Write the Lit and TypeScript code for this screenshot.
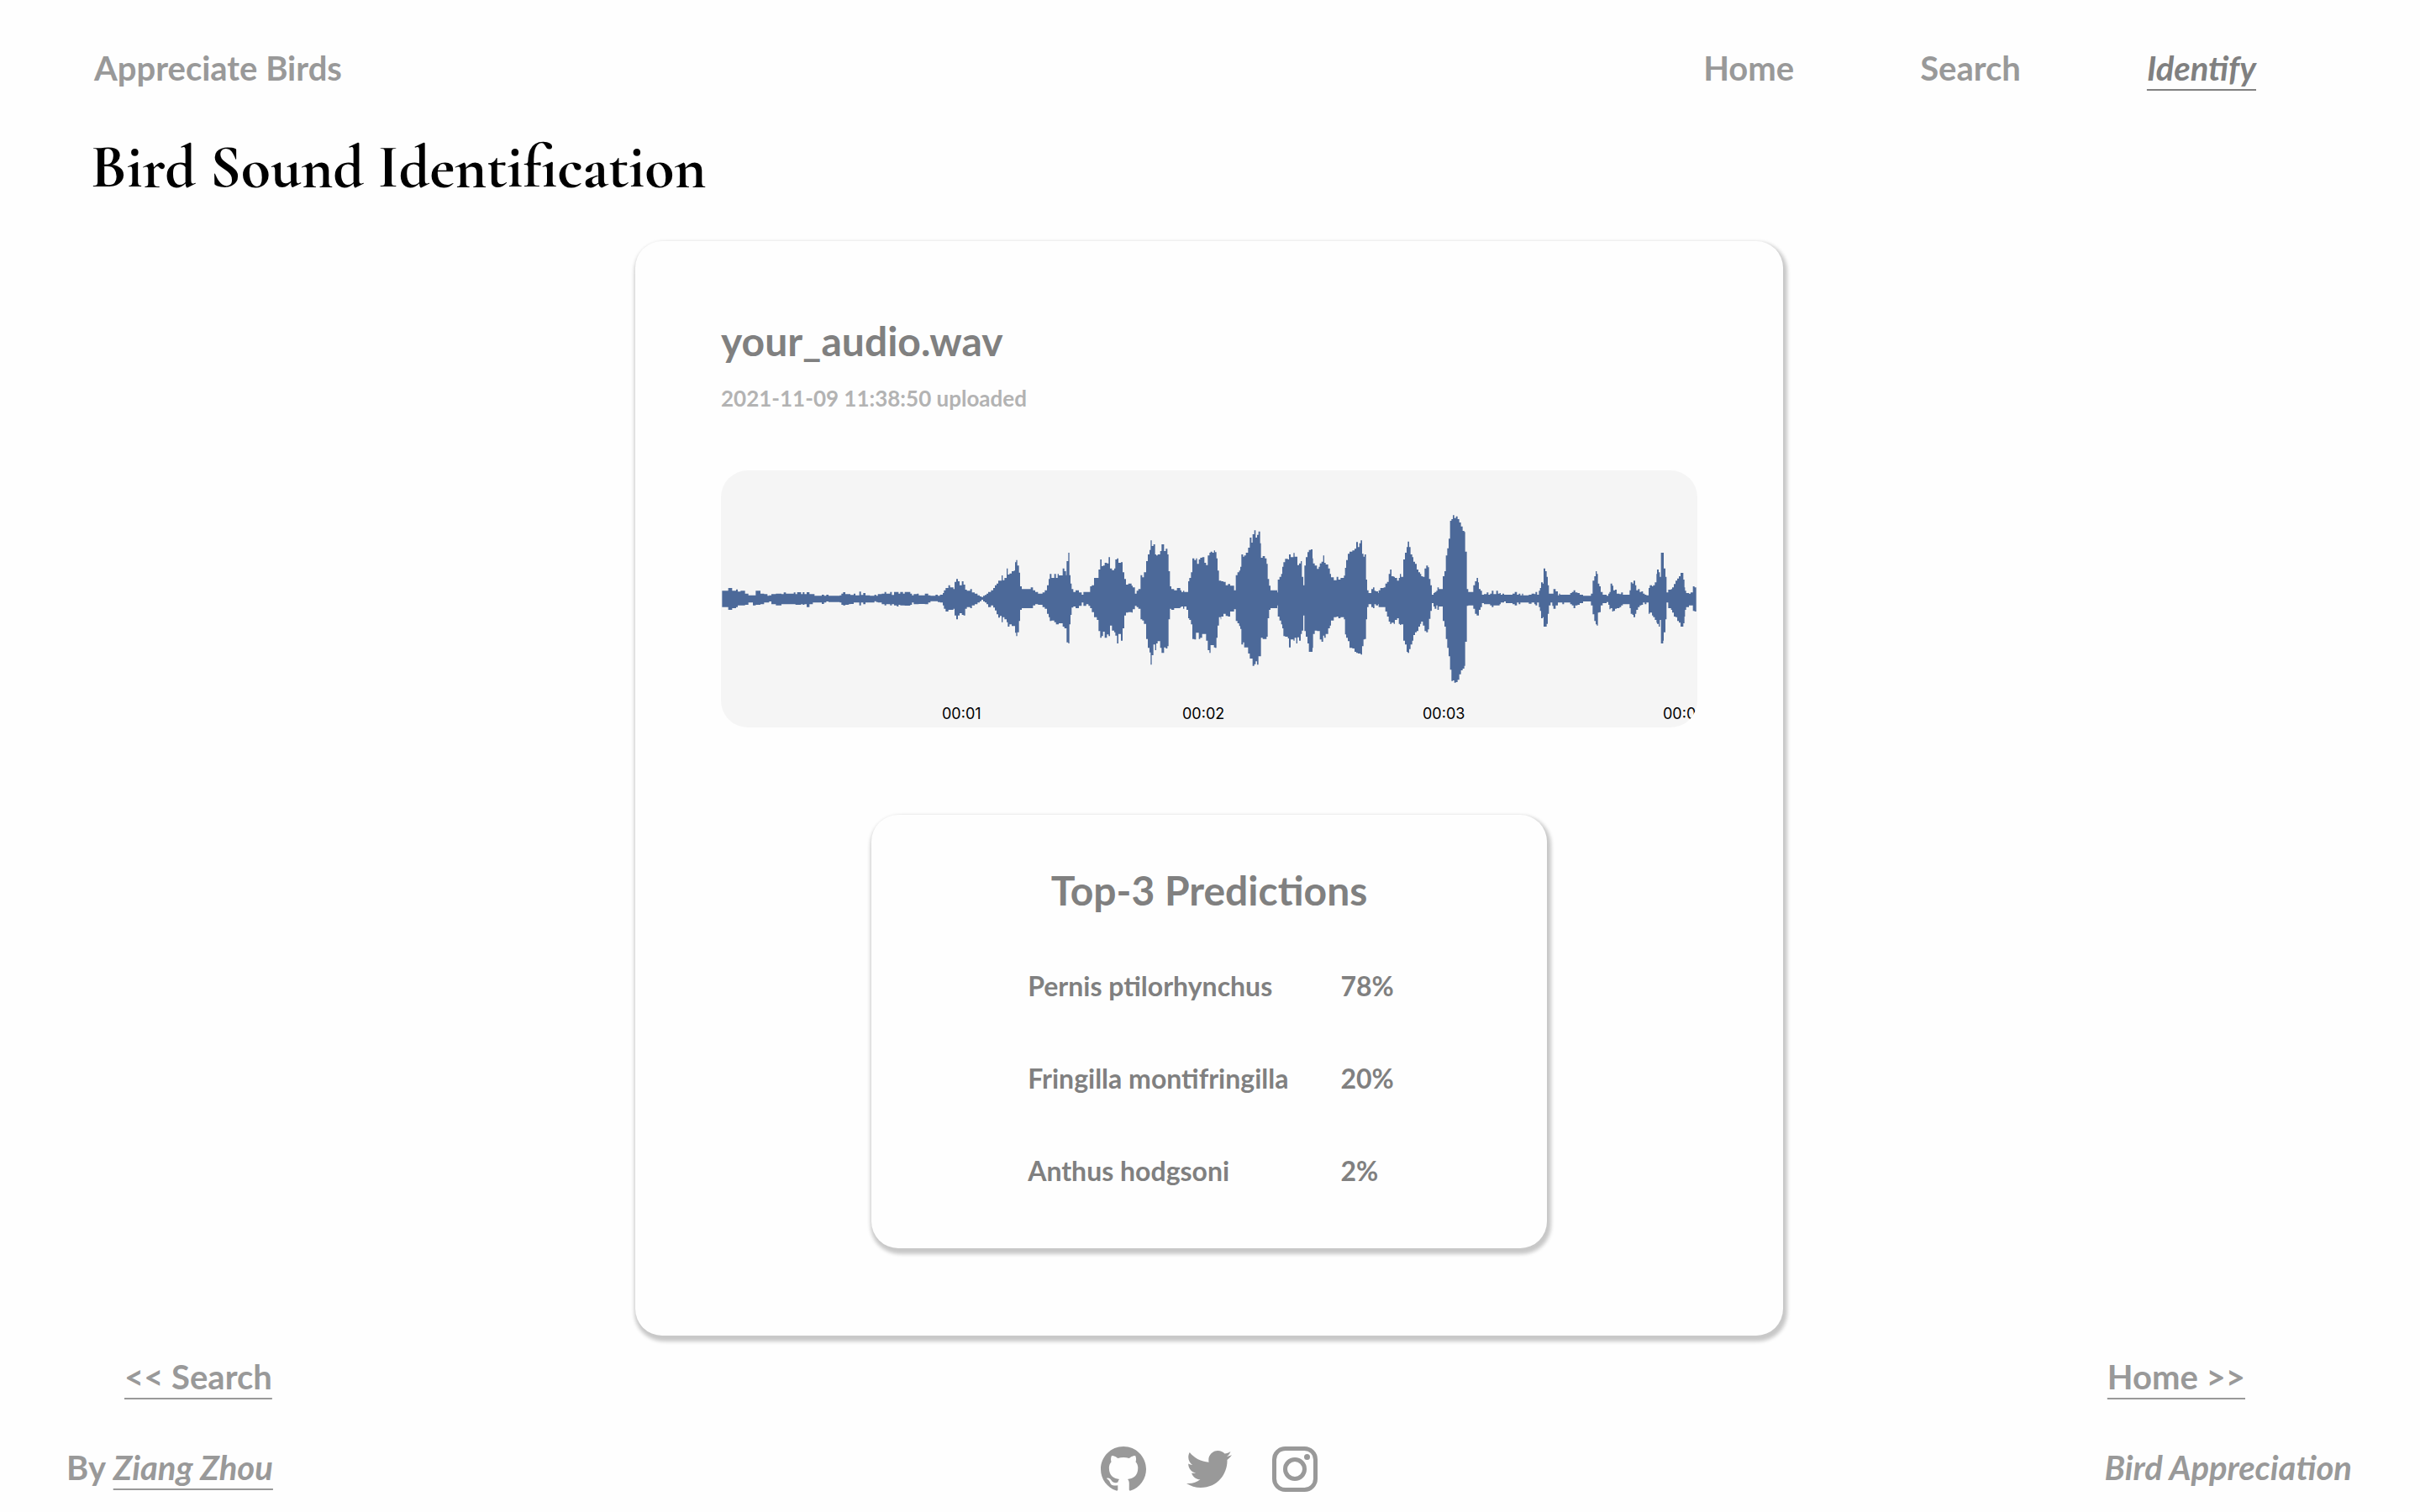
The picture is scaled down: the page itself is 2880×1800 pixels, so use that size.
import { LitElement, html, css, svg } from "lit";
import { customElement, property } from "lit/decorators.js";

/* Envelope steps "x,top,bottom", grouped by the x at which each group starts. */
const ENVELOPE: Array<[number, string]> = [
  [0, "28,310,368 50,300,378 64,310,372 78,305,368 84,313,362 94,310,362 110,320,360 122,326,352 138,326,362 148,310,360 165,320,358 178,322,352 190,328,352 196,326,348 204,322,358 220,320,362 240,322,358 248,316,358 256,320,358 284,316,358 290,322,360 296,315,360 310,322,358 316,315,360 322,322,358 330,315,368 340,322,358 352,322,352 358,328,352 384,324,357 392,328,352 400,324,348 408,328,350 448,326,352 454,320,360 460,315,362 468,322,360 480,322,358 486,325,357 498,320,352 504,326,352 518,313,362 524,325,352 532,318,358 540,326,352 556,328,352 572,324,347 578,328,350 584,322,352 598,320,358 608,314,362 614,320,358 628,314,362 634,325,358 642,314,362 652,314,366 658,320,360 664,314,362 674,320,362 680,314,363 700,320,360 706,326,352 712,322,358 724,320,358 730,326,357 752,320,358 764,326,352 772,328,347 790,324,347 798,328,350 806,324,352 816,318,362 820,308,374 826,300,384 836,290,378 842,298,378 854,304,374 858,278,398 864,268,412 870,276,398 876,290,390 884,276,396 890,288,398 896,306,374 902,310,368 914,304,372 920,316,362 930,320,358 940,326,352 948,330,347 954,332,342 960,328,348 966,325,352 972,320,358 978,314,368 988,308,362 996,300,370 1002,290,380 1008,284,394 1014,274,406 1020,274,400 1026,255,422 1030,272,404 1036,264,412 1044,230,422 1048,252,438 1054,248,430 1062,240,436 1070,238,436 1074,208,460 1078,200,472 1082,220,458 1088,245,418 1092,294,378 1098,304,372 1130,298,372 1138,308,362 1146,314,358 1156,320,360 1172,316,368 1180,308,374 1188,290,392 1194,268,404 1198,250,418 1204,264,416 1214,250,422 1220,264,430 1226,250,430"],
  [1230, "0,255,426 14,230,438 20,240,444 26,254,444 28,204,494 34,174,498 38,254,430 42,284,396 46,304,370 52,314,366 60,308,372 72,316,364 82,324,352 88,314,364 98,314,358 106,314,364 112,294,372 118,290,386 126,264,404 136,264,414 142,234,454 148,198,478 153,222,472 158,220,456 164,210,478 172,212,466 178,190,472 183,230,434 190,236,452 198,230,458 202,198,470 208,194,498 213,210,464 222,208,488 228,244,444 234,268,398 240,288,388 248,284,386 260,292,388 264,298,376 272,320,364 278,310,368 284,304,374 292,254,412 298,262,416 304,244,428 312,204,482 318,180,514 324,164,530 328,130,574 332,150,540 338,144,502 344,180,522 348,184,498 353,180,490 362,168,514 367,144,532 376,168,512 382,160,516 388,180,508 392,240,412 397,294,374 402,304,378 412,308,372 422,300,372 434,308,368 438,314,366 444,310,374 448,314,366 456,314,378 462,276,408 466,264,414 472,244,430 477,194,482 484,200,484 490,194,460 494,214,460 500,198,482 505,192,478 512,190,464 520,210,464 526,218,488 532,184,522 538,174,532 542,170,504 548,174,504 554,166,512 558,172,514 563,194,478 567,238,434 572,274,404 578,274,412 580,276,402 588,278,392 596,290,400 604,286,402 612,292,384 626,308,376 632,254,418 638,244,426 644,238,436 648,224,446 652,180,502 658,188,494 662,184,512 668,174,512 676,156,534 682,120,552 688,138,552 692,108,578 698,94,572 703,120,562 708,110,574 713,98,544 719,140,544 722,192,478 728,186,482 736,194,482 742,214,474 746,268,408 751,292,378 756,308,372 780,316,362 782,270,402 788,260,416 794,250,430 798,224,444 802,208,472 808,196,474 818,198,480 822,180,512 828,190,484 838,175,488 842,188,478 848,188,498 852,218,476 858,212,488 864,204,464 868,260,452 873,290,398 877,220,454 882,190,474 888,172,498 893,164,528 900,162,528 906,194,514 908,212,464 914,220,452 922,232,454 928,224,454 932,212,484 938,206,492 944,184,470 948,210,478 953,216,464 962,230,444 968,250,434 972,262,416 982,272,404 992,260,402 998,270,408 1006,264,404 1018,256,412 1022,228,466 1026,200,478 1032,178,490 1038,170,514 1048,166,516 1056,160,528 1062,136,532 1068,154,534 1073,140,534 1078,130,538 1083,178,508 1088,188,484 1092,180,482 1097,270,412 1101,308,368 1106,318,358 1116,304,368 1122,298,372 1127,310,358 1132,312,362 1140,318,358 1142,308,368 1148,300,368 1160,298,368 1166,284,384 1172,278,402 1178,250,420 1183,234,428 1188,258,424 1196,260,428 1200,264,414 1208,274,408 1214,264,428 1218,250,432 1222,260,430"],
  [2460, "0,198,488 6,174,502 12,154,528 16,134,532 21,154,518 26,180,502 32,190,488 36,206,468 42,214,458 48,234,454 54,244,438 60,250,428 64,258,420 70,260,434 76,230,454 82,220,458 88,226,448 92,268,410 97,290,382 102,324,354 108,318,366 112,314,374 118,310,362 122,298,378 127,304,366 141,258,418 147,240,438 152,184,482 157,158,514 162,124,544 167,60,592 172,54,632 177,40,630 182,50,638 188,44,636 194,54,628 200,66,608 206,80,594 212,96,588 218,100,578 221,170,492 227,304,364 232,314,362 250,290,374 256,276,392 262,264,398 267,280,398 270,304,378 276,310,368 281,324,354 288,322,358 298,316,358 304,324,358 310,320,362 316,310,368 322,322,362 332,310,362 338,320,362 344,318,358 348,324,352 354,320,352 360,324,348 366,324,354 390,320,358 398,314,362 406,324,352 412,320,358 418,326,352 424,320,352 428,326,352 448,324,356 458,320,352 468,322,358 472,314,362 478,324,352 484,310,368 488,300,382 492,280,408 498,284,404 501,230,438 507,240,438 512,260,428 516,290,392 520,320,362 526,320,352 532,320,364 536,304,374 544,312,362 552,326,352 556,320,352 560,324,352 568,324,358 574,324,352 596,318,358 602,314,362 608,308,372 614,316,362 622,318,360 630,324,354 642,328,348 670,320,362 676,274,394 682,258,418 687,240,430 691,250,434 695,284,388 700,294,386 705,314,362 712,324,354 726,328,350 732,320,360 736,314,376 740,284,372 746,292,384 750,308,382 756,306,374 762,320,372 772,322,368 778,316,362 784,324,358 808,308,372 812,280,392 818,284,396 822,274,404 828,290,392 832,308,378 838,304,368 844,314,362 850,312,360 856,320,352 862,324,358 868,326,352 876,300,392 880,290,388 888,294,398 892,290,404 898,280,414 904,250,424 906,234,428 912,244,438 916,260,414 920,174,498 928,174,488 930,230,458 936,260,412 940,316,352 946,306,372 956,304,378 960,298,388 966,286,402 972,274,404 978,266,418 984,258,424 990,246,438 1000,270,426 1004,298,402 1006,310,378 1010,318,368 1020,320,362 1026,316,362 1034,294,382 1040,298,384 1046,298,384"],
];

function envelopePath(): string {
  const steps = ENVELOPE.flatMap(([origin, data]) =>
    data.split(" ").map((s) => {
      const [x, top, bottom] = s.split(",").map(Number);
      return { x: x + origin, top, bottom };
    })
  );
  let upper = `M${steps[0].x} ${steps[0].top}`;
  let lower = "";
  for (let i = 1; i < steps.length; i++) {
    upper += `H${steps[i].x}V${steps[i].top}`;
  }
  for (let i = steps.length - 1; i > 0; i--) {
    lower += `V${steps[i - 1].bottom}H${steps[i - 1].x}`;
  }
  return `${upper}${lower}Z`;
}

@customElement("audio-waveform")
export class AudioWaveform extends LitElement {
  @property({ attribute: false }) ticks: string[] = [];

  static styles = css`
    :host {
      display: block;
      overflow: hidden;
      border-radius: 32px;
      background: #f5f5f5;
    }
    .wave {
      display: block;
      width: 100%;
      fill: #4c6999;
    }
    .axis {
      display: grid;
      grid-template-columns: repeat(4, 286px);
      margin: 0 1px;
      padding-left: 262px;
      overflow: hidden;
      color: #000;
      font-family: Inter, sans-serif;
      font-size: 18px;
      font-weight: 400;
      line-height: 33px;
    }
  `;

  render() {
    return html`
      <svg class="wave" viewBox="24 -120 3486 819" role="img" aria-label="Waveform">
        <path d=${envelopePath()} />
      </svg>
      <div class="axis">${this.ticks.map((t) => html`<span>${t}</span>`)}</div>
    `;
  }
}

const github = svg`<path d="M8 0C3.58 0 0 3.58 0 8c0 3.54 2.29 6.53 5.47 7.59.4.07.55-.17.55-.38 0-.19-.01-.82-.01-1.49-2.01.37-2.53-.49-2.69-.94-.09-.23-.48-.94-.82-1.13-.28-.15-.68-.52-.01-.53.63-.01 1.08.58 1.23.82.72 1.21 1.87.87 2.33.66.07-.52.28-.87.51-1.07-1.78-.2-3.64-.89-3.64-3.95 0-.87.31-1.59.82-2.15-.08-.2-.36-1.02.08-2.12 0 0 .67-.21 2.2.82.64-.18 1.32-.27 2-.27s1.36.09 2 .27c1.53-1.04 2.2-.82 2.2-.82.44 1.1.16 1.92.08 2.12.51.56.82 1.27.82 2.15 0 3.07-1.87 3.75-3.65 3.95.29.25.54.73.54 1.48 0 1.07-.01 1.93-.01 2.2 0 .21.15.46.55.38A8.01 8.01 0 0 0 16 8c0-4.42-3.58-8-8-8z"/>`;
const twitter = svg`<path d="M459.37 151.716c.325 4.548.325 9.097.325 13.645 0 138.72-105.583 298.558-298.558 298.558-59.452 0-114.68-17.219-161.137-47.106 8.447.974 16.568 1.299 25.34 1.299 49.055 0 94.213-16.568 130.274-44.832-46.132-.975-84.792-31.188-98.112-72.772 6.498.974 12.995 1.624 19.818 1.624 9.421 0 18.843-1.3 27.614-3.573-48.081-9.747-84.143-51.98-84.143-102.985v-1.299c13.969 7.797 30.214 12.67 47.431 13.319-28.264-18.843-46.781-51.005-46.781-87.391 0-19.492 5.197-37.36 14.294-52.954 51.655 63.675 129.3 105.258 216.365 109.807-1.624-7.797-2.599-15.918-2.599-24.04 0-57.828 46.782-104.934 104.934-104.934 30.213 0 57.502 12.67 76.67 33.137 23.715-4.548 46.456-13.32 66.599-25.34-7.798 24.366-24.366 44.833-46.132 57.827 21.117-2.273 41.584-8.122 60.426-16.243-14.292 20.791-32.161 39.308-52.628 54.253z"/>`;
const instagram = svg`<rect x="2.5" y="2.5" width="49" height="49" rx="13" fill="none" stroke="currentColor" stroke-width="5"/><circle cx="27" cy="27" r="11.5" fill="none" stroke="currentColor" stroke-width="5"/><circle cx="41.5" cy="12.5" r="3.5"/>`;

@customElement("app-root")
export class AppRoot extends LitElement {
  private predictions = [
    { name: "Pernis ptilorhynchus", score: "78%" },
    { name: "Fringilla montifringilla", score: "20%" },
    { name: "Anthus hodgsoni", score: "2%" },
  ];

  static styles = css`
    :host {
      display: block;
      box-sizing: border-box;
      min-height: 100vh;
      padding-right: 2px;
      background: #fefefe;
      color: #999;
      font-family: Lato, sans-serif;
      font-size: 40px;
      font-weight: 700;
      line-height: 48px;
    }
    * {
      box-sizing: border-box;
    }
    a {
      color: inherit;
      text-decoration: none;
    }
    .underlined {
      text-decoration: underline 2px;
      text-underline-offset: 10px;
      text-decoration-skip-ink: none;
    }
    .header {
      display: flex;
      justify-content: space-between;
      padding: 57px 193px 0 112px;
    }
    .menu {
      display: flex;
      gap: 150px;
    }
    .current {
      color: #808080;
      font-style: italic;
    }
    h1,
    h2,
    p {
      margin: 0;
    }
    h1 {
      padding: 54px 108px 48px;
      color: #000;
      font: 700 72px/80px "Cormorant Garamond", "Liberation Serif", serif;
    }
    .card,
    .results {
      border-radius: 32px;
      background: #fefefe;
      box-shadow: 2px 4px 4px 3px #c8c8c8;
    }
    .card {
      width: min(1366px, 100%);
      margin: 0 auto;
      padding: 91px 102px 104px;
    }
    h2 {
      color: #808080;
      font-size: 48px;
      line-height: 56px;
    }
    .uploaded {
      padding: 24px 0 70px;
      color: #b3b3b3;
      font-size: 26px;
      line-height: 32px;
    }
    .results {
      display: flex;
      flex-direction: column;
      align-items: center;
      width: min(804px, 100%);
      margin: 104px auto 0;
      padding: 62px 0 37px;
    }
    table {
      margin: 31px 0 0 4px;
      border-collapse: collapse;
      color: #808080;
      font-size: 32px;
      line-height: 40px;
    }
    th,
    td {
      padding: 35px 0;
      font-weight: inherit;
      text-align: left;
    }
    th {
      padding-right: 62px;
    }
    .pager {
      display: flex;
      justify-content: space-between;
      padding: 25px 206px 59px 148px;
    }
    .footer {
      display: grid;
      grid-template-columns: 1fr auto 1fr;
      padding: 0 79px 22px;
      line-height: 50px;
    }
    .social {
      display: flex;
      gap: 48px;
    }
    .social a {
      width: 54px;
      height: 54px;
    }
    .social svg {
      display: block;
      width: 100%;
      height: 100%;
      fill: currentColor;
    }
    .project {
      font-style: italic;
      text-align: right;
    }
    em {
      font-style: italic;
    }
  `;

  render() {
    return html`
      <header class="header">
        <a href="#">Appreciate Birds</a>
        <nav class="menu">
          <a href="#home">Home</a>
          <a href="#search">Search</a>
          <a class="current underlined" href="#identify">Identify</a>
        </nav>
      </header>
      <main>
        <h1>Bird Sound Identification</h1>
        <section class="card">
          <h2>your_audio.wav</h2>
          <p class="uploaded">2021-11-09 11:38:50 uploaded</p>
          <audio-waveform .ticks=${["00:01", "00:02", "00:03", "00:04"]}></audio-waveform>
          <section class="results">
            <h2>Top-3 Predictions</h2>
            <table>
              <tbody>
                ${this.predictions.map(
                  (p) => html`<tr><th scope="row">${p.name}</th><td>${p.score}</td></tr>`
                )}
              </tbody>
            </table>
          </section>
        </section>
      </main>
      <nav class="pager">
        <a class="underlined" href="#search">&lt;&lt; Search</a>
        <a class="underlined" href="#home">Home &gt;&gt;</a>
      </nav>
      <footer class="footer">
        <div>By <a class="underlined" href="#author"><em>Ziang Zhou</em></a></div>
        <div class="social">
          <a href="#github" aria-label="GitHub"><svg viewBox="0 0 16 16">${github}</svg></a>
          <a href="#twitter" aria-label="Twitter"><svg viewBox="0 0 512 512">${twitter}</svg></a>
          <a href="#instagram" aria-label="Instagram"><svg viewBox="0 0 54 54">${instagram}</svg></a>
        </div>
        <div class="project">Bird Appreciation</div>
      </footer>
    `;
  }
}
